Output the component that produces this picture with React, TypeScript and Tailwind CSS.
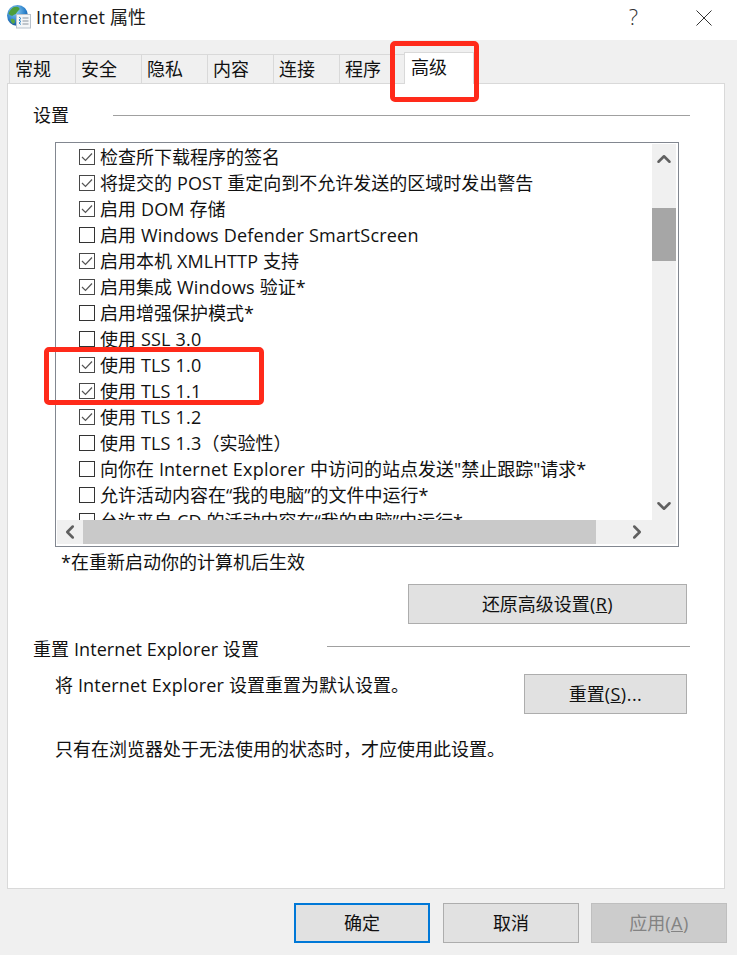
import { ChevronUp, ChevronDown, ChevronLeft, ChevronRight } from "lucide-react";

const tabs = ["常规", "安全", "隐私", "内容", "连接", "程序"];

const settings: { label: string; checked: boolean }[] = [
  { label: "检查所下载程序的签名", checked: true },
  { label: "将提交的 POST 重定向到不允许发送的区域时发出警告", checked: true },
  { label: "启用 DOM 存储", checked: true },
  { label: "启用 Windows Defender SmartScreen", checked: false },
  { label: "启用本机 XMLHTTP 支持", checked: true },
  { label: "启用集成 Windows 验证*", checked: true },
  { label: "启用增强保护模式*", checked: false },
  { label: "使用 SSL 3.0", checked: false },
  { label: "使用 TLS 1.0", checked: true },
  { label: "使用 TLS 1.1", checked: true },
  { label: "使用 TLS 1.2", checked: true },
  { label: "使用 TLS 1.3（实验性）", checked: false },
  { label: "向你在 Internet Explorer 中访问的站点发送\"禁止跟踪\"请求*", checked: false },
  { label: "允许活动内容在“我的电脑”的文件中运行*", checked: false },
  { label: "允许来自 CD 的活动内容在“我的电脑”中运行*", checked: false },
];

// latin runs sit a bit wider in the dialog font than in Open Sans
function Label({ text }: { text: string }) {
  return (
    <>
      {text.split(/([A-Za-z0-9. ]{2,})/).map((part, i) =>
        i % 2 === 1 ? (
          <span key={i} className="tracking-[0.2px]">
            {part}
          </span>
        ) : (
          part
        ),
      )}
    </>
  );
}

function GlobeIcon() {
  return (
    <svg width="26" height="26" viewBox="0 0 26 26" className="shrink-0 mb-[4px]">
      <defs>
        <radialGradient id="sea" cx="0.4" cy="0.3" r="0.8">
          <stop offset="0" stopColor="#8fd0f5" />
          <stop offset="0.6" stopColor="#2a7fc9" />
          <stop offset="1" stopColor="#123f7a" />
        </radialGradient>
      </defs>
      <circle cx="11.5" cy="10.5" r="10.5" fill="url(#sea)" />
      <path d="M7 2.5 C9 1 13 1.5 13.5 3.5 C14 5 11.5 6 10.5 8 C9.5 10 8 9 7 10.5 C5.5 11.5 3.5 10 2.5 8.5 C3.5 6 5 4 7 2.5Z" fill="#4c9e3a" />
      <path d="M5 14 C7 13 9 14 9 17 C8 19 7 19 6 18 C5 17 4 15 5 14Z" fill="#5aa843" />
      <rect x="10.5" y="9.5" width="14" height="13.5" fill="#f4f6f8" stroke="#b9c2cc" />
      <path d="M13 12 L15 13.5 L13 15 L15 16.5 L13 18 L15 19.5" fill="none" stroke="#2f86c9" strokeWidth="1" />
      <path d="M16.5 13h6M16.5 16h6M16.5 19h6" stroke="#8a949e" strokeWidth="1" />
    </svg>
  );
}

function Checkbox({ checked }: { checked: boolean }) {
  return (
    <span
      className={
        checked
          ? "w-4 h-4 shrink-0 border border-[#484848] bg-white flex items-center justify-center"
          : "w-4 h-4 shrink-0 border border-[#333333] bg-white flex items-center justify-center"
      }
    >
      {checked && (
        <svg width="14" height="14" viewBox="0 0 14 14">
          <path d="M2 7 L5.5 10.5 L12 3.5" fill="none" stroke="#555555" strokeWidth="1.2" />
        </svg>
      )}
    </span>
  );
}

function GroupTitle({ title, width, labelClass }: { title: string; width: string; labelClass: string }) {
  return (
    <div className="flex items-center h-6 pl-[25px] pr-[34px]">
      <span className={`${width} ${labelClass} shrink-0 tracking-[0.08px]`}>{title}</span>
      <span className="flex-1 h-px bg-[#a0a0a0]" />
    </div>
  );
}

function DialogButton({ children, className }: { children: React.ReactNode; className: string }) {
  return (
    <button className={`h-10 flex items-center justify-center border bg-[#e1e1e1] border-[#adadad] ${className}`}>
      {children}
    </button>
  );
}

export default function App() {
  return (
    <div className="relative w-[737px] h-[955px] overflow-hidden bg-[#f0f0f0] text-[18px] leading-[26px] text-[#111111] font-['Open_Sans','Noto_Sans_CJK_SC',sans-serif]">
      {/* title bar */}
      <div className="h-10 bg-white flex items-center pl-[6px]">
        <GlobeIcon />
        <span className="ml-[4px] mb-[6px] text-[#1a1a1a]">
          <Label text="Internet 属性" />
        </span>
        <span className="ml-auto mr-[58px] mb-[8px] text-[22px] font-light text-[#333333]">?</span>
        <svg width="16" height="16" viewBox="0 0 16 16" className="mr-[25px] mb-[5px]">
          <path d="M0.5 0.5 L15.5 15.5 M15.5 0.5 L0.5 15.5" stroke="#333333" strokeWidth="1" />
        </svg>
      </div>

      {/* tabs */}
      <div className="relative z-10 h-[44px] flex items-end pl-[9px]">
        {tabs.map((t) => (
          <div key={t} className="w-[66px] h-[30px] pl-[5px] border-t border-l border-[#d9d9d9] leading-[28px]">
            {t}
          </div>
        ))}
        <div className="w-[70px] h-[32px] pl-[6px] ml-[-1px] bg-white border-t border-x border-[#d9d9d9] leading-[28px]">
          高级
        </div>
      </div>

      {/* panel */}
      <div className="mx-[7px] -mt-px w-[718px] h-[806px] bg-white border border-[#d9d9d9] pt-[19px]">
        <GroupTitle title="设置" width="w-[80px]" labelClass="" />

        <div className="ml-[47px] mt-[15px] w-[624px] h-[405px] border border-[#828790] pl-px pr-[2px] pt-px pb-[2px] flex flex-col">
          <div className="flex h-[376px]">
            <div className="flex-1 overflow-hidden">
              {settings.map((s) => (
                <div key={s.label} className="h-[26px] pl-[22px] flex items-center gap-[5px] whitespace-nowrap">
                  <Checkbox checked={s.checked} />
                  <span>
                    <Label text={s.label} />
                  </span>
                </div>
              ))}
            </div>
            <div className="w-6 bg-[#f0f0f0] flex flex-col items-center text-[#606060]">
              <div className="h-[30px] flex items-center justify-center">
                <ChevronUp size={22} strokeWidth={2.8} />
              </div>
              <div className="mt-[34px] w-6 h-[53px] bg-[#a6a6a6]" />
              <div className="mt-auto h-[28px] flex items-center justify-center">
                <ChevronDown size={22} strokeWidth={2.8} />
              </div>
            </div>
          </div>
          <div className="h-6 bg-[#f0f0f0] flex items-center text-[#606060]">
            <div className="w-[26px] flex justify-center">
              <ChevronLeft size={22} strokeWidth={2.8} />
            </div>
            <div className="w-[513px] h-6 bg-[#c9c9c9]" />
            <div className="flex-1 flex justify-center pl-[2px]">
              <ChevronRight size={22} strokeWidth={2.8} />
            </div>
          </div>
        </div>

        <p className="ml-[53px] mt-[2px] h-[26px] leading-[26px]">*在重新启动你的计算机后生效</p>

        <div className="flex justify-end pr-[37px] mt-[9px]">
          <DialogButton className="w-[279px]">
            <span>
              还原高级设置<span className="tracking-[0.5px]">(<span className="underline">R</span>)</span>
            </span>
          </DialogButton>
        </div>

        <div className="mt-[10px]">
          <GroupTitle title="重置 Internet Explorer 设置" width="w-[294px]" labelClass="translate-y-[3px]" />
        </div>

        <div className="flex items-start justify-between pl-[47px] pr-[37px] mt-[16px]">
          <span className="mt-[-2px]">
            <Label text="将 Internet Explorer 设置重置为默认设置。" />
          </span>
          <DialogButton className="w-[163px]">
            <span>
              重置<span className="tracking-[0.5px]">(<span className="underline">S</span>)...</span>
            </span>
          </DialogButton>
        </div>

        <p className="ml-[47px] mt-[22px]">只有在浏览器处于无法使用的状态时，才应使用此设置。</p>
      </div>

      {/* footer buttons */}
      <div className="flex justify-end gap-[13px] pr-[10px] pt-[14px]">
        <button className="w-[136px] h-10 bg-[#e1e1e1] border-2 border-[#0078d7]">确定</button>
        <DialogButton className="w-[136px]">取消</DialogButton>
        <button className="w-[136px] h-10 -ml-px bg-[#cccccc] border border-[#bfbfbf] text-[#838383]">
          应用<span className="tracking-[0.5px]">(<span className="underline">A</span>)</span>
        </button>
      </div>

      {/* red annotations */}
      <div className="absolute left-[390px] top-[41px] w-[89px] h-[61px] border-[5px] border-[#ff2a1a] rounded-[5px] z-20" />
      <div className="absolute left-[44px] top-[347px] w-[220px] h-[58px] border-[5px] border-[#ff2a1a] rounded-[5px] z-20" />
    </div>
  );
}
